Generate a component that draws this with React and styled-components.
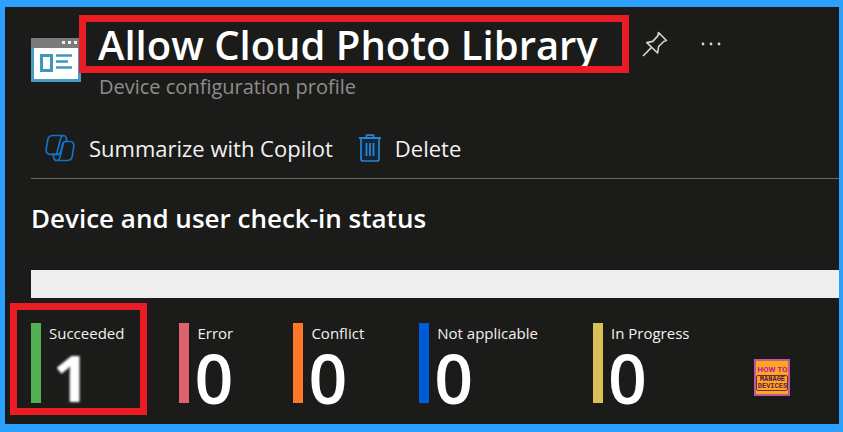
import React from "react";
import styled, { createGlobalStyle } from "styled-components";

const stats = [
  { label: "Succeeded", value: 1, color: "#54b054", marked: true },
  { label: "Error", value: 0, color: "#dc626d" },
  { label: "Conflict", value: 0, color: "#fc7728" },
  { label: "Not applicable", value: 0, color: "#015cda" },
  { label: "In Progress", value: 0, color: "#dac157" },
];

const ProfileIcon = () => (
  <svg width="50" height="44" viewBox="0 0 50 44" aria-hidden="true">
    <rect width="50" height="44" fill="#4a9cc4" />
    <rect width="50" height="10" fill="#7b7b7c" />
    <rect x="3" y="10" width="44" height="31" fill="#fff" />
    <path d="M31 3h3v3h-3zM37 3h3v3h-3zM43 3h3v3h-3z" fill="#f2f2f2" />
    <rect x="10.5" y="17.5" width="10" height="15" fill="#fff" stroke="#3f97bf" strokeWidth="3" />
    <path d="M25 17.5h16M25 23.5h12M25 29.5h16" stroke="#3f97bf" strokeWidth="2.4" />
  </svg>
);

const PinIcon = () => (
  <svg width="26" height="26" viewBox="0 0 26 26" fill="none" stroke="#d6d5d3" strokeWidth="1.6" strokeLinejoin="round" aria-hidden="true">
    <path d="M16.5 1.5L24.5 9.5L22 10.2L16.6 15.5L15.6 22L4.8 11.6L10.8 10.4L16 4.6Z" />
    <path d="M9.6 16.4L1 25" />
  </svg>
);

const MoreIcon = () => (
  <svg width="20" height="4" viewBox="0 0 20 4" fill="#d6d5d3" aria-hidden="true">
    <circle cx="2" cy="2" r="1.4" />
    <circle cx="10" cy="2" r="1.4" />
    <circle cx="18" cy="2" r="1.4" />
  </svg>
);

const CopilotIcon = () => (
  <svg width="30" height="28" viewBox="0 0 30 28" fill="none" stroke="#1272c4" strokeWidth="1.7" strokeLinejoin="round" aria-hidden="true">
    <path d="M8 1.5H18Q20.5 1.5 21 3.5L22 7.5H20.5Q18.4 7.5 18 9.5L15.6 18.2Q15 20.3 12.8 20.3H4.8Q0.8 20.3 1.2 15.5L2.8 5.5Q3.8 1.5 8 1.5Z" />
    <path d="M22 26.5H12Q9.5 26.5 9 24.5L8 20.3H12.8Q15 20.3 15.6 18.2L18 9.5Q18.4 7.5 20.5 7.5H25.2Q29.2 7.5 28.8 12.3L27.2 22.5Q26.2 26.5 22 26.5Z" />
    <path d="M18.5 1.5Q16.2 1.8 15.6 4.5L11.6 20.3M12.5 26.5Q14.2 26.2 15 23.5L18.4 8.6" />
  </svg>
);

const TrashIcon = () => (
  <svg width="22" height="28" viewBox="0 0 22 28" fill="none" stroke="#2b83cc" aria-hidden="true">
    <path d="M2 4.5V25Q2 27 4 27H18Q20 27 20 25V4.5" fill="#10273b" strokeWidth="1.7" />
    <path d="M0 4H22M7.5 4V1.2H14.5V4" strokeWidth="1.8" />
    <path d="M7.5 9V22M11 9V22M14.5 9V22" strokeWidth="1.8" />
  </svg>
);

const App = () => {
  return (
    <Page>
      <GlobalStyle />
      <Header>
        <ProfileIcon />
        <TitleRow>
          <Title>Allow Cloud Photo Library</Title>
          <IconButton aria-label="Pin">
            <PinIcon />
          </IconButton>
          <IconButton aria-label="More">
            <MoreIcon />
          </IconButton>
        </TitleRow>
        <Subtitle>Device configuration profile</Subtitle>
      </Header>
      <Toolbar>
        <Command>
          <CopilotIcon />
          Summarize with Copilot
        </Command>
        <Command>
          <TrashIcon />
          Delete
        </Command>
      </Toolbar>
      <Heading>Device and user check-in status</Heading>
      <StatusBar />
      <Stats>
        {stats.map((stat) => (
          <Stat key={stat.label} $color={stat.color}>
            {stat.marked && <Mark />}
            <Label>{stat.label}</Label>
            <Value $marked={stat.marked}>{stat.value}</Value>
          </Stat>
        ))}
        <Badge>
          <BadgeTop>HOW TO</BadgeTop>
          <BadgeName>
            MANAGE
            <br />
            DEVICES
          </BadgeName>
        </Badge>
      </Stats>
    </Page>
  );
};

const GlobalStyle = createGlobalStyle`
  body {
    margin: 0;
    background: #1b1b19;
  }

  * {
    box-sizing: border-box;
  }
`;

const Page = styled.main`
  min-height: 100vh;
  padding: 8px 0 0 26px;
  border: solid #2ba0ff;
  border-width: 7px 4px 8px 5px;
  background: #1b1b19;
  color: #fff;
  font-family: "Open Sans", "Noto Sans", sans-serif;
`;

const Header = styled.header`
  display: grid;
  grid-template-columns: 48px 1fr;

  > svg {
    margin-top: 23px;
    grid-row: 1 / 3;
  }
`;

const TitleRow = styled.div`
  display: flex;
  align-items: center;
  z-index: 1;
`;

const Title = styled.h1`
  height: 58px;
  margin: 0 12px 0 0;
  padding: 0 24px 0 12px;
  border: 7px solid #ec1c24;
  overflow: hidden;
  font-size: 40px;
  font-weight: 600;
  line-height: 46px;
  white-space: nowrap;
`;

const IconButton = styled.button`
  display: flex;
  justify-content: center;
  width: 28px;
  margin-right: 28px;
  padding: 0;
  border: 0;
  background: none;
  cursor: pointer;
`;

const Subtitle = styled.p`
  margin: 0 0 0 20px;
  color: #8f8d8b;
  font-size: 20px;
  line-height: 28px;
`;

const Toolbar = styled.div`
  display: flex;
  align-items: center;
  gap: 26px;
  height: 62px;
  margin-top: 16px;
  padding-left: 14px;
  border-bottom: 1px solid #6b6a68;
`;

const Command = styled.button`
  display: flex;
  align-items: center;
  gap: 14px;
  padding: 0;
  border: 0;
  background: none;
  color: #f3f2f1;
  font: inherit;
  font-size: 22px;
  line-height: 28px;
  cursor: pointer;
`;

const Heading = styled.h2`
  margin: 22px 0 34px;
  font-size: 26px;
  font-weight: 600;
  line-height: 35px;
`;

const StatusBar = styled.div`
  height: 28px;
  background: #eee;
`;

const Stats = styled.div`
  display: flex;
  gap: 55px;
  margin-top: 25px;
`;

const Stat = styled.div`
  position: relative;
  min-width: 59px;
  height: 80px;
  padding-left: 8px;
  border-left: 10px solid ${(props) => props.$color};
`;

const Mark = styled.div`
  position: absolute;
  inset: -20px -23px -12px -31px;
  border: 7px solid #ec1c24;
`;

const Label = styled.div`
  color: #f3f2f1;
  font-size: 15px;
  font-weight: 500;
  line-height: 20px;
  white-space: nowrap;
`;

const Value = styled.div`
  margin-left: ${(props) => (props.$marked ? "4px" : "-3px")};
  font-size: ${(props) => (props.$marked ? "64px" : "68px")};
  font-weight: ${(props) => (props.$marked ? 700 : 600)};
  line-height: 70px;
  filter: ${(props) => (props.$marked ? "blur(1px)" : "none")};
`;

const Badge = styled.div`
  width: 36px;
  height: 37px;
  margin: 36px 0 0 10px;
  padding-top: 4px;
  border: 2px solid #c4559f;
  background: #fca81c;
  text-align: center;
`;

const BadgeTop = styled.div`
  color: #c010b8;
  font: bold 8px/10px Roboto, sans-serif;
  white-space: nowrap;
`;

const BadgeName = styled.div`
  border: 1px solid #6b2a45;
  border-radius: 2px;
  color: #5e1450;
  font: bold 7px/7px "Liberation Mono", monospace;
`;

export default App;
